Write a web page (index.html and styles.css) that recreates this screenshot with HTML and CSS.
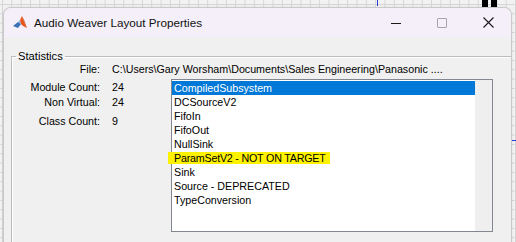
FILE: index.html
```html
<!DOCTYPE html>
<html lang="en">
<head>
    <meta charset="UTF-8">
    <meta name="viewport" content="width=device-width, initial-scale=1.0">
    <title>Audio Weaver Layout Properties</title>
    <link rel="stylesheet" href="styles.css">
</head>
<body>
    <div class="desk">
        <span class="mark mark-blue-top"></span>
        <span class="mark mark-black-a"></span>
        <span class="mark mark-black-b"></span>
        <span class="mark mark-blue-side"></span>

        <div class="window">
            <div class="titlebar">
                <svg class="app-icon" width="16" height="16" viewBox="0 0 16 16">
                    <polygon points="1,11 6,7 9,9 6,13" fill="#3b6fb6"/>
                    <polygon points="6,7 8,5 9,9" fill="#8fb5e0"/>
                    <polygon points="8,5 10,1 13,9 15,13 11,11 9,9" fill="#e8581c"/>
                    <polygon points="10,1 12,5 15,13 13,9" fill="#b8300e"/>
                </svg>
                <span class="title">Audio Weaver Layout Properties</span>
                <div class="controls">
                    <span class="ctl"><span class="min-line"></span></span>
                    <span class="ctl"><span class="max-box"></span></span>
                    <span class="ctl">
                        <svg width="11" height="11" viewBox="0 0 11 11">
                            <path d="M0.5 0.5 L10.5 10.5 M10.5 0.5 L0.5 10.5" stroke="#1a1a1a" stroke-width="1.1"/>
                        </svg>
                    </span>
                </div>
            </div>

            <div class="client">
                <fieldset class="group">
                    <legend>Statistics</legend>

                    <div class="file-row">
                        <span class="label">File:</span>
                        <span class="value">C:\Users\Gary Worsham\Documents\Sales Engineering\Panasonic ....</span>
                    </div>

                    <div class="stats">
                        <div class="counts">
                            <div class="count-row">
                                <span class="label">Module Count:</span>
                                <span class="value">24</span>
                            </div>
                            <div class="count-row">
                                <span class="label">Non Virtual:</span>
                                <span class="value">24</span>
                            </div>
                            <div class="count-row count-last">
                                <span class="label">Class Count:</span>
                                <span class="value">9</span>
                            </div>
                        </div>

                        <div class="listbox">
                            <ul class="items">
                                <li class="selected">CompiledSubsystem</li>
                                <li>DCSourceV2</li>
                                <li>FifoIn</li>
                                <li>FifoOut</li>
                                <li>NullSink</li>
                                <li><span class="marker">ParamSetV2 - NOT ON TARGET</span></li>
                                <li>Sink</li>
                                <li>Source - DEPRECATED</li>
                                <li>TypeConversion</li>
                            </ul>
                            <div class="scroll-strip"></div>
                        </div>
                    </div>
                </fieldset>
            </div>
        </div>
    </div>
</body>
</html>
```

FILE: styles.css
```css
html, body {
    margin: 0;
    padding: 0;
    overflow: hidden;
}
body {
    font-family: "Liberation Sans", Arial, sans-serif;
    font-size: 10.7px;
    color: #000;
}
.desk {
    position: relative;
    width: 516px;
    height: 242px;
    padding: 7px 0 0 3px;
    box-sizing: border-box;
    background-color: #f2f2f2;
    background-image:
        linear-gradient(to right, #d5d5d5 1px, transparent 1px),
        linear-gradient(to bottom, #d5d5d5 1px, transparent 1px);
    background-size: 9.33px 9.33px;
    background-position: 2px 4px;
}
.mark {
    position: absolute;
}
.mark-blue-top {
    left: 377px;
    top: 0;
    width: 1px;
    height: 6px;
    background: #2a3ad8;
}
.mark-black-a {
    left: 482px;
    top: 0;
    width: 6px;
    height: 7px;
    background: #000;
}
.mark-black-b {
    left: 491px;
    top: 0;
    width: 6px;
    height: 7px;
    background: #000;
}
.mark-blue-side {
    left: 510px;
    top: 140px;
    width: 6px;
    height: 1px;
    background: #2a3ad8;
}
.window {
    position: relative;
    width: 507px;
    height: 240px;
    border: 1px solid #c9c9cc;
    border-bottom: none;
    border-radius: 8px 8px 0 0;
    overflow: hidden;
    background: #f0f0f0;
    box-shadow: 0 0 3px rgba(0,0,0,0.08);
}
.titlebar {
    display: flex;
    align-items: center;
    height: 29px;
    background: #f4eff8;
}
.app-icon {
    margin-left: 8px;
    margin-top: 1px;
}
.title {
    margin-left: 6px;
    font-size: 11.7px;
    color: #111;
}
.controls {
    display: flex;
    margin-left: auto;
    height: 100%;
}
.ctl {
    display: flex;
    align-items: center;
    justify-content: center;
    width: 46px;
    height: 100%;
}
.min-line {
    width: 10px;
    height: 1px;
    background: #1a1a1a;
    margin-top: 1px;
}
.max-box {
    width: 8px;
    height: 8px;
    border: 1px solid #a6a6a6;
    border-radius: 1px;
    margin-top: 1px;
}
.client {
    padding: 13px 0 0 7px;
}
.group {
    margin: 0;
    padding: 0;
    width: 520px;
    height: 200px;
    border: 1px solid #bcbcbc;
    box-shadow: inset 1px 1px 0 #fff;
}
.group legend {
    margin-left: 4px;
    padding: 0 2px;
    line-height: 12px;
    font-size: 11.2px;
}
.file-row {
    display: flex;
    line-height: 14px;
    margin-bottom: 3px;
}
.label {
    width: 88px;
    text-align: right;
    flex-shrink: 0;
}
.value {
    margin-left: 12px;
    white-space: nowrap;
}
.stats {
    display: flex;
    align-items: flex-start;
}
.counts {
    width: 159px;
    padding-top: 1px;
}
.count-row {
    display: flex;
    line-height: 15px;
}
.count-last {
    margin-top: 4px;
}
.listbox {
    display: flex;
    width: 320px;
    height: 151px;
    border: 1px solid #828790;
    background: #fff;
}
.items {
    flex: 1;
    list-style: none;
    margin: 0;
    padding: 1px 0 0 0;
}
.items li {
    height: 14px;
    line-height: 14px;
    padding-left: 2px;
    white-space: nowrap;
}
.items li.selected {
    background: #0078d7;
    color: #fff;
}
.marker {
    display: inline-block;
    height: 12px;
    line-height: 12px;
    margin-left: -6px;
    padding: 0 4px 0 6px;
    background: #fff200;
    vertical-align: top;
    margin-top: 1px;
    letter-spacing: -0.2px;
}
.scroll-strip {
    width: 17px;
    background: #efefef;
}
```
